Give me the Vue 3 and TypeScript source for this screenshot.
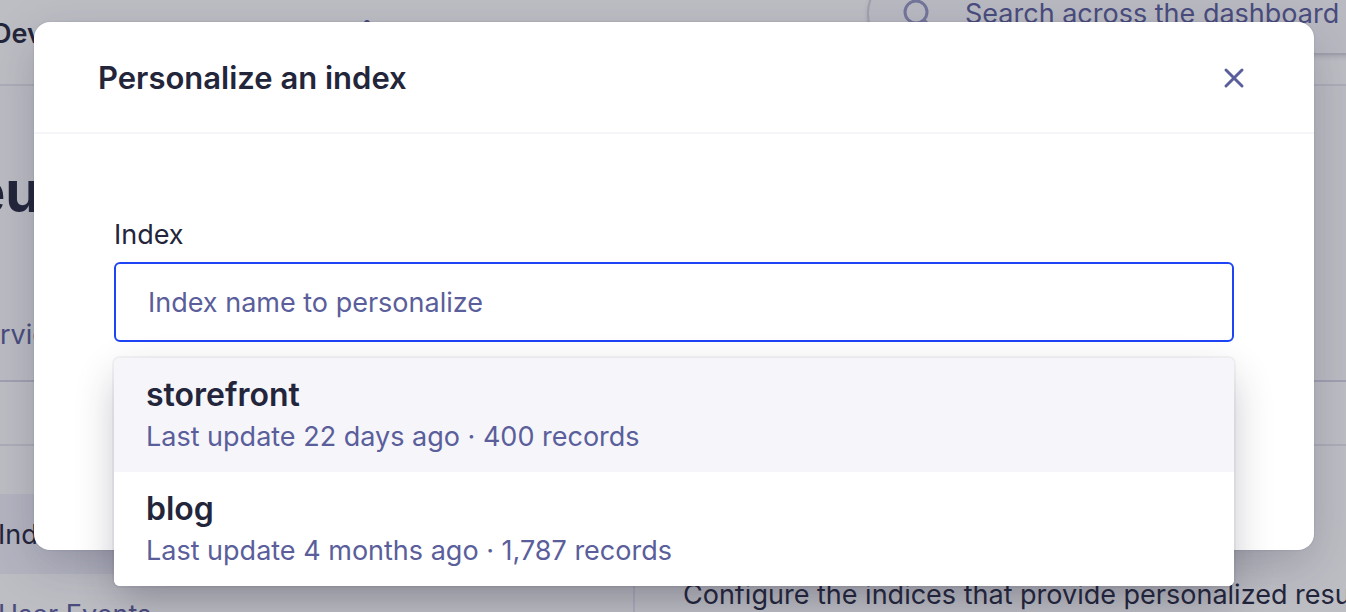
<script setup lang="ts">
import { ref } from 'vue'

interface IndexOption {
  name: string
  updated: string
  records: string
}

const query = ref('')
const selected = ref('storefront')
const options: IndexOption[] = [
  { name: 'storefront', updated: '22 days ago', records: '400' },
  { name: 'blog', updated: '4 months ago', records: '1,787' },
]
</script>

<template>
  <div class="screen">
    <div class="page" inert>
      <header class="topbar">
        <span class="env">Dev</span>
        <svg class="caret" width="14" height="20" viewBox="0 0 14 20" aria-hidden="true">
          <path d="M2 6 L7 1 L12 6 M2 14 L7 19 L12 14" />
        </svg>
        <label class="search">
          <svg width="32" height="32" viewBox="0 0 32 32" aria-hidden="true">
            <circle cx="15" cy="13" r="11" />
            <path d="M23 21 L30 28" />
          </svg>
          <input type="text" placeholder="Search across the dashboard" aria-label="Search" />
        </label>
      </header>
      <section class="hero">
        <h1>eu</h1>
        <p>rvic</p>
      </section>
      <div class="strip"></div>
      <div class="columns">
        <nav class="sidebar">
          <a class="current" href="#indices">Ind</a>
          <a href="#events">User Events</a>
        </nav>
        <main class="content">
          <p>Configure the indices that provide personalized results</p>
        </main>
      </div>
    </div>

    <div class="overlay">
      <section class="dialog" role="dialog" aria-modal="true" aria-labelledby="dialog-title">
        <header class="dialog-head">
          <h2 id="dialog-title">Personalize an index</h2>
          <button class="close" type="button" aria-label="Close">
            <svg width="24" height="24" viewBox="0 0 24 24" aria-hidden="true">
              <path d="M4 4 L20 20 M20 4 L4 20" />
            </svg>
          </button>
        </header>
        <div class="dialog-body">
          <label class="field-label" for="index-name">Index</label>
          <div class="combo">
            <input id="index-name" v-model="query" type="text" placeholder="Index name to personalize" autocomplete="off" />
            <div class="menu" role="listbox" aria-label="Indices">
              <button
                v-for="option in options"
                :key="option.name"
                class="option"
                :class="{ active: option.name === selected }"
                type="button"
                role="option"
                :aria-selected="option.name === selected"
                @mouseenter="selected = option.name"
              >
                <strong>{{ option.name }}</strong>
                <span>Last update {{ option.updated }} · {{ option.records }} records</span>
              </button>
            </div>
          </div>
        </div>
      </section>
    </div>
  </div>
</template>

<style>
body {
  margin: 0;
  overflow: hidden;
}
</style>

<style scoped>
* {
  box-sizing: border-box;
}

.screen {
  position: relative;
  height: 100vh;
  overflow: hidden;
  font-family: Inter, "Liberation Sans", sans-serif;
  font-size: 27px;
  line-height: 42px;
  color: #23263b;
}

h1,
h2,
p {
  margin: 0;
}

input,
button {
  font: inherit;
  color: inherit;
}

.page {
  background: #fff;
  min-height: 100vh;
}

.topbar {
  display: flex;
  align-items: flex-start;
  height: 86px;
  border-bottom: 2px solid #e8e8f0;
}

.env {
  flex: 0 0 368px;
  margin-left: -8px;
  padding-top: 13px;
  font-weight: 600;
}

.caret {
  margin-top: 20px;
  fill: none;
  stroke: #5a5e9a;
  stroke-width: 3;
}

.search {
  display: flex;
  gap: 32px;
  width: 520px;
  height: 82px;
  margin-top: -27px;
  margin-right: -41px;
  margin-left: auto;
  padding: 20px 0 0 32px;
  border: 2px solid #d6d6e0;
  border-radius: 41px;
  background: #fafafd;
  box-shadow: 0 2px 4px rgba(35, 38, 59, 0.15);
}

.search svg {
  flex: none;
  margin-top: 4px;
  fill: none;
  stroke: #9698c3;
  stroke-width: 3;
}

.search input {
  width: 100%;
  height: 38px;
  padding: 0;
  border: 0;
  background: none;
}

input::placeholder {
  color: #5a5e9a;
  opacity: 1;
}

.hero {
  height: 296px;
  padding-top: 72px;
  border-bottom: 2px solid #d6d6e7;
  background: #fcfcfe;
}

.hero h1 {
  margin-left: -28px;
  font-size: 56px;
  font-weight: 700;
  line-height: 68px;
}

.hero p {
  margin-top: 88px;
  color: #5a5e9a;
}

.strip {
  height: 64px;
  border-bottom: 2px solid #e8e8ee;
}

.columns {
  display: flex;
  height: 200px;
}

.sidebar {
  flex: 0 0 635px;
  padding-top: 48px;
  border-right: 2px solid #e8e8f5;
}

.sidebar a {
  display: block;
  padding: 20px 0 18px;
  color: #5a5e9a;
  text-decoration: none;
  text-indent: -2px;
}

.sidebar a.current {
  color: #23263b;
  background: #f2f2fb;
}

.content {
  padding: 128px 0 0 48px;
  white-space: nowrap;
}

.overlay {
  position: absolute;
  inset: 0;
  padding: 22px 32px 0 34px;
  background: rgba(35, 38, 59, 0.3);
}

.dialog {
  border-radius: 16px;
  background: #fff;
  box-shadow: 0 0 2px rgba(35, 38, 59, 0.2), 0 16px 48px -4px rgba(35, 38, 59, 0.25);
}

.dialog-head {
  display: flex;
  align-items: center;
  justify-content: space-between;
  height: 112px;
  padding: 2px 64px 0;
  border-bottom: 2px solid #f5f5fa;
}

.dialog-head h2 {
  font-size: 31px;
  font-weight: 600;
  line-height: 40px;
}

.close {
  display: flex;
  padding: 4px;
  border: 0;
  background: none;
}

.close svg {
  fill: none;
  stroke: #5a5e9a;
  stroke-width: 3;
  stroke-linecap: round;
}

.dialog-body {
  padding: 80px 80px 208px;
}

.field-label {
  display: block;
  margin-bottom: 6px;
}

.combo {
  position: relative;
}

.combo input {
  display: block;
  width: 100%;
  height: 80px;
  padding: 0 32px;
  border: 2px solid #1e44f5;
  border-radius: 6px;
  outline: 0;
  background: #fff;
}

.menu {
  position: absolute;
  top: 96px;
  right: 0;
  left: 0;
  overflow: hidden;
  border-radius: 6px;
  background: #fff;
  box-shadow: 0 0 0 2px rgba(35, 38, 59, 0.05), 0 16px 40px -4px rgba(35, 38, 59, 0.3);
}

.option {
  display: flex;
  flex-direction: column;
  width: 100%;
  padding: 16px 32px 14px;
  border: 0;
  background: #fff;
  text-align: left;
}

.option.active {
  background: #f5f5fa;
}

.option strong {
  font-size: 32px;
  font-weight: 600;
  line-height: 42px;
}

.option span {
  color: #5a5e9a;
}
</style>
